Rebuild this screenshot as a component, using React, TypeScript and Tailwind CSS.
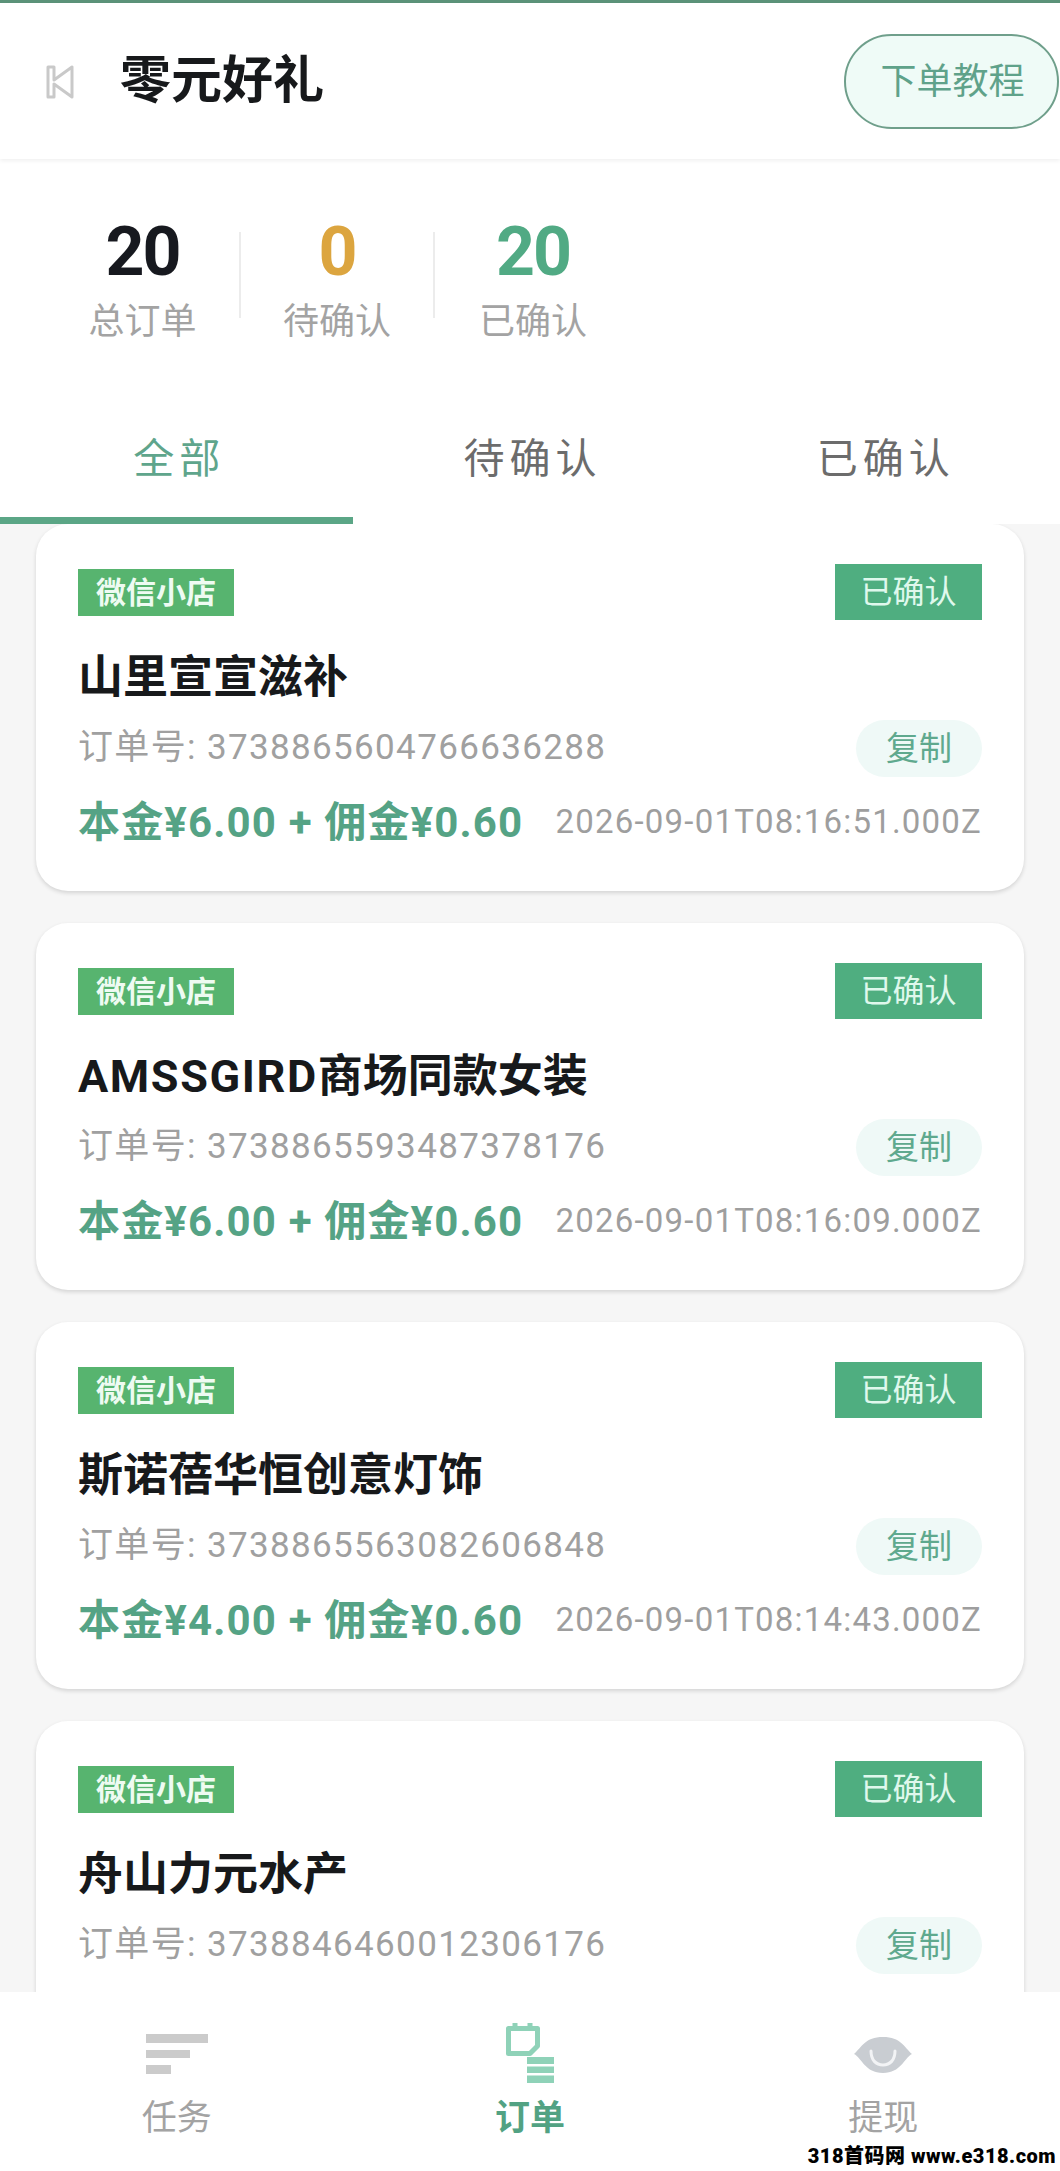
type Order = { latin?: string; title: string; no: string; base?: string; fee?: string; time?: string };

const orders: Order[] = [
  { title: "山里宣宣滋补", no: "3738865604766636288", base: "6.00", fee: "0.60", time: "2026-09-01T08:16:51.000Z" },
  { latin: "AMSSGIRD", title: "商场同款女装", no: "3738865593487378176", base: "6.00", fee: "0.60", time: "2026-09-01T08:16:09.000Z" },
  { title: "斯诺蓓华恒创意灯饰", no: "3738865563082606848", base: "4.00", fee: "0.60", time: "2026-09-01T08:14:43.000Z" },
  { title: "舟山力元水产", no: "3738846460012306176" },
];

function Stat({ value, label, color, width }: { value: string; label: string; color: string; width: string }) {
  return (
    <div className={`flex flex-col items-center ${width}`}>
      <div className={`h-[70px] text-[68px] leading-[70px] font-bold tracking-[-2px] ${color}`}>{value}</div>
      <div className="mt-[12px] h-[46px] text-[36px] leading-[46px] text-[#a3a3a3]">{label}</div>
    </div>
  );
}

function Card({ o }: { o: Order }) {
  return (
    <div className="h-[367px] shrink-0 rounded-[32px] bg-white pl-[42px] pr-[42px] pt-[40px] shadow-[0_2px_4px_rgba(0,0,0,0.14)]">
      <div className="flex h-[56px] items-center justify-between">
        <span className="flex h-[47px] w-[156px] items-center justify-center bg-[#57b46f] text-[30px] font-bold text-[#eefbf2]">微信小店</span>
        <span className="flex h-[56px] w-[147px] items-center justify-center bg-[#4fae80] text-[32px] text-[#dff8ec]">已确认</span>
      </div>
      <div className="mt-[28px] h-[60px] text-[45px] leading-[60px] font-bold text-[#17191b]">
        {o.latin && <span className="tracking-[1.6px]">{o.latin}</span>}
        {o.title}
      </div>
      <div className="mt-[12px] flex h-[57px] items-center justify-between">
        <span className="text-[35px] tracking-[1.35px] text-[#a0a0a0]">订单号: {o.no}</span>
        <span className="flex h-[57px] w-[126px] items-center justify-center rounded-full bg-[#eff9f7] text-[33px] text-[#5fa98e]">复制</span>
      </div>
      {o.base && (
        <div className="mt-[20px] flex h-[50px] items-center justify-between">
          <span className="text-[42px] font-bold tracking-[1.15px] text-[#55a385]">本金¥{o.base} + 佣金¥{o.fee}</span>
          <span className="text-[33px] tracking-[1.2px] text-[#9e9e9e]">{o.time}</span>
        </div>
      )}
    </div>
  );
}

export default function App() {
  return (
    <div className="relative flex h-[2171px] w-[1060px] flex-col overflow-hidden bg-white font-['Roboto','Noto_Sans_CJK_SC',sans-serif]">
      <div className="h-[3px] shrink-0 bg-[#5b9279]" />
      <header className="relative z-10 flex h-[156px] shrink-0 items-center pl-[46px] pr-[1px] pt-[1px] shadow-[0_2px_4px_rgba(0,0,0,0.06)]">
        <svg width="28" height="34" viewBox="0 0 28 34" fill="none" stroke="#c9c9c9" strokeWidth="3" strokeLinejoin="round">
          <path d="M2 2H8V15L26 2V32L8 19V32H2Z" />
        </svg>
        <h1 className="ml-[46px] text-[51px] font-bold text-[#17191b]">零元好礼</h1>
        <button className="ml-auto flex h-[95px] w-[215px] items-center justify-center rounded-full border-2 border-[#6f9f8b] bg-[#effbf7] pl-[2px] text-[36px] text-[#5fa28a]">下单教程</button>
      </header>

      <section className="flex h-[241px] shrink-0 items-start pl-[46px] pt-[58px]">
        <Stat value="20" label="总订单" color="text-[#17191f]" width="w-[193px]" />
        <div className="mt-[15px] h-[86px] w-[2px] bg-[#ececec]" />
        <Stat value="0" label="待确认" color="text-[#dca53f]" width="w-[192px]" />
        <div className="mt-[15px] h-[86px] w-[2px] bg-[#ececec]" />
        <Stat value="20" label="已确认" color="text-[#51aa84]" width="w-[196px]" />
      </section>

      <nav className="flex h-[124px] shrink-0">
        <div className="flex flex-1 items-center justify-center border-b-[7px] border-[#5ba686] pl-[5px] pt-[2px] text-[41px] tracking-[5px] text-[#5fa58c]">全部</div>
        <div className="flex flex-1 items-center justify-center border-b-[7px] border-transparent pl-[5px] pt-[2px] text-[41px] tracking-[5px] text-[#6c6c6c]">待确认</div>
        <div className="flex flex-1 items-center justify-center border-b-[7px] border-transparent pl-[5px] pt-[2px] text-[41px] tracking-[5px] text-[#6c6c6c]">已确认</div>
      </nav>

      <main className="flex min-h-0 flex-1 flex-col gap-[32px] overflow-hidden bg-[#f6f6f6] px-[36px]">
        {orders.map((o) => (
          <Card key={o.no} o={o} />
        ))}
      </main>

      <footer className="flex h-[179px] shrink-0 bg-white">
        <div className="flex flex-1 flex-col items-center">
          <div className="flex h-[91px] items-end pb-[9px]">
            <svg width="62" height="40" viewBox="0 0 62 40" fill="#cbcbcb">
              <rect x="0" y="0" width="62" height="9" />
              <rect x="0" y="16" width="44" height="8" />
              <rect x="0" y="31" width="25" height="9" />
            </svg>
          </div>
          <span className="mt-[14px] text-[35px] leading-[44px] text-[#a3a3a3]">任务</span>
        </div>
        <div className="flex flex-1 flex-col items-center">
          <div className="flex h-[91px] items-end">
            <svg width="48" height="61" viewBox="0 0 48 61" fill="none">
              <path d="M2.5 6.5H31.500V24L24 31.500H2.500Z" stroke="#8fd2b8" strokeWidth="5" strokeLinejoin="round" />
              <path d="M9 1V8M24 1V8" stroke="#8fd2b8" strokeWidth="5" />
              <path d="M21 35H48V42H21ZM21 44.500H48V51H21ZM21 53.500H48V61H21Z" fill="#8fd2b8" />
            </svg>
          </div>
          <span className="mt-[14px] text-[35px] leading-[44px] font-bold text-[#52a283]">订单</span>
        </div>
        <div className="flex flex-1 flex-col items-center">
          <div className="flex h-[91px] items-end pb-[10px]">
            <svg width="58" height="36" viewBox="0 0 58 36" fill="none">
              <path d="M0 17C8 10 11 0 29 0C47 0 50 10 58 17C50 21 47 36 29 36C11 36 8 21 0 17Z" fill="#c9cdd2" />
              <path d="M17 14C17 23 22 28 29 28C36 28 41 23 41 14" stroke="#f2f3f5" strokeWidth="3" strokeLinecap="round" />
            </svg>
          </div>
          <span className="mt-[14px] text-[35px] leading-[44px] text-[#a3a3a3]">提现</span>
        </div>
      </footer>

      <div className="absolute bottom-[5px] right-[4px] text-[20px] leading-[20px] font-black tracking-[0.5px] text-black">318首码网 www.e318.com</div>
    </div>
  );
}
